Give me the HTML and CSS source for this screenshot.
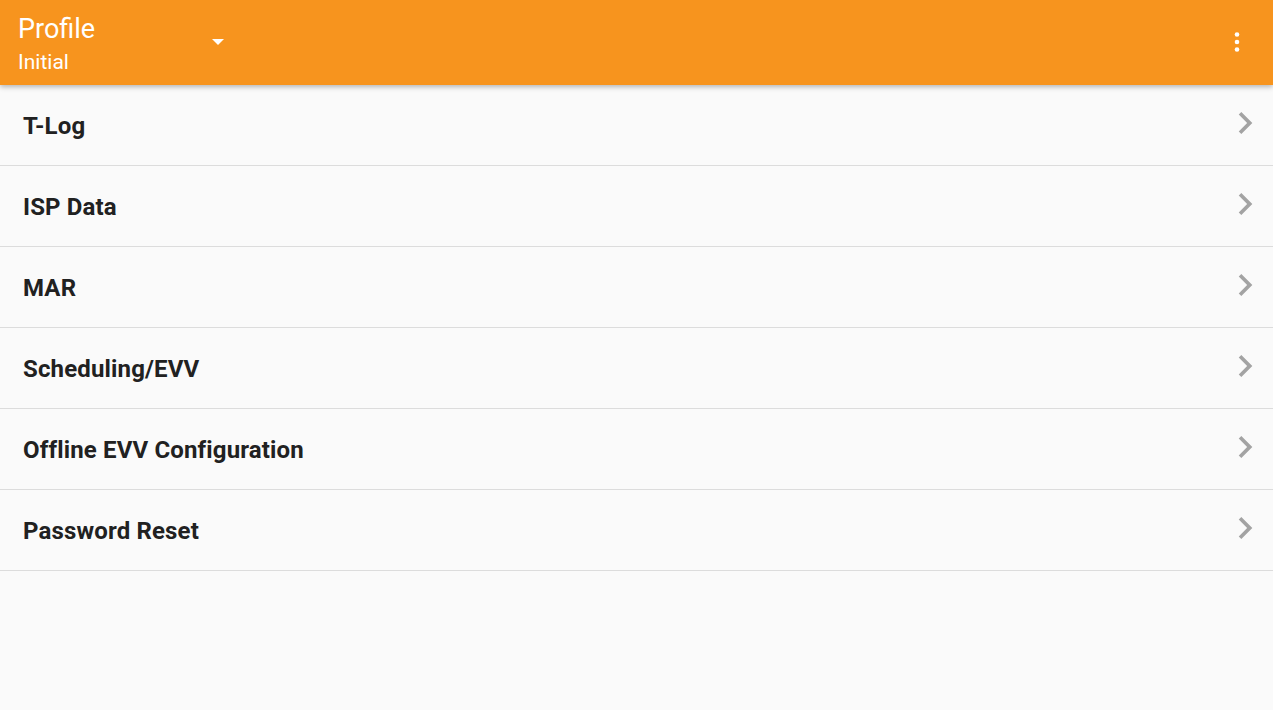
FILE: index.html
```html
<!DOCTYPE html>
<html lang="en">
<head>
<meta charset="utf-8">
<title>Profile</title>
<link rel="stylesheet" href="styles.css">
</head>
<body>
<header class="appbar">
  <div class="title-block">
    <div class="title">Profile</div>
    <div class="subtitle">Initial</div>
  </div>
  <svg class="drop" width="14" height="8" viewBox="0 0 14 8"><path d="M1 1h12L7 7z" fill="#fff"/></svg>
  <div class="spacer"></div>
  <svg class="more" width="8" height="24" viewBox="0 0 8 24"><circle cx="4" cy="4.5" r="2.3" fill="#fff"/><circle cx="4" cy="12" r="2.3" fill="#fff"/><circle cx="4" cy="19.5" r="2.3" fill="#fff"/></svg>
</header>
<main class="list">
  <div class="row"><span class="label">T-Log</span><svg class="chev" width="44" height="44" viewBox="0 0 24 24"><path d="M10 6L8.59 7.41 13.17 12l-4.58 4.59L10 18l6-6z" fill="#a3a3a3"/></svg></div>
  <div class="row"><span class="label">ISP Data</span><svg class="chev" width="44" height="44" viewBox="0 0 24 24"><path d="M10 6L8.59 7.41 13.17 12l-4.58 4.59L10 18l6-6z" fill="#a3a3a3"/></svg></div>
  <div class="row"><span class="label">MAR</span><svg class="chev" width="44" height="44" viewBox="0 0 24 24"><path d="M10 6L8.59 7.41 13.17 12l-4.58 4.59L10 18l6-6z" fill="#a3a3a3"/></svg></div>
  <div class="row"><span class="label">Scheduling/EVV</span><svg class="chev" width="44" height="44" viewBox="0 0 24 24"><path d="M10 6L8.59 7.41 13.17 12l-4.58 4.59L10 18l6-6z" fill="#a3a3a3"/></svg></div>
  <div class="row"><span class="label">Offline EVV Configuration</span><svg class="chev" width="44" height="44" viewBox="0 0 24 24"><path d="M10 6L8.59 7.41 13.17 12l-4.58 4.59L10 18l6-6z" fill="#a3a3a3"/></svg></div>
  <div class="row"><span class="label">Password Reset</span><svg class="chev" width="44" height="44" viewBox="0 0 24 24"><path d="M10 6L8.59 7.41 13.17 12l-4.58 4.59L10 18l6-6z" fill="#a3a3a3"/></svg></div>
</main>
</body>
</html>
```
FILE: styles.css
```css
html, body {
  margin: 0;
  padding: 0;
  height: 100%;
  background: #fafafa;
  font-family: Roboto, "Noto Sans", "Liberation Sans", sans-serif;
  overflow: hidden;
}
.appbar {
  position: relative;
  z-index: 2;
  height: 85px;
  box-sizing: border-box;
  background: #f7941e;
  display: flex;
  align-items: flex-start;
  padding: 0 32px 0 18px;
  box-shadow: 0 2px 5px rgba(0,0,0,0.28);
  color: #fff;
}
.title-block {
  display: flex;
  flex-direction: column;
  width: 193px;
  padding-top: 13px;
  gap: 3px;
}
.title {
  font-size: 27px;
  line-height: 32px;
}
.subtitle {
  font-size: 21px;
  line-height: 28px;
}
.drop {
  display: block;
  margin-top: 38px;
}
.spacer { flex: 1; }
.more {
  display: block;
  margin-top: 30px;
}
.list {
  display: flex;
  flex-direction: column;
}
.row {
  height: 80px;
  box-sizing: content-box;
  border-bottom: 1px solid #dcdcdc;
  display: flex;
  align-items: center;
  justify-content: space-between;
  padding: 0 6px 0 23px;
}
.label {
  font-size: 24px;
  font-weight: 700;
  letter-spacing: 0.15px;
  color: #212121;
  padding-top: 2px;
}
.chev { display: block; margin-top: -4px; }
```
